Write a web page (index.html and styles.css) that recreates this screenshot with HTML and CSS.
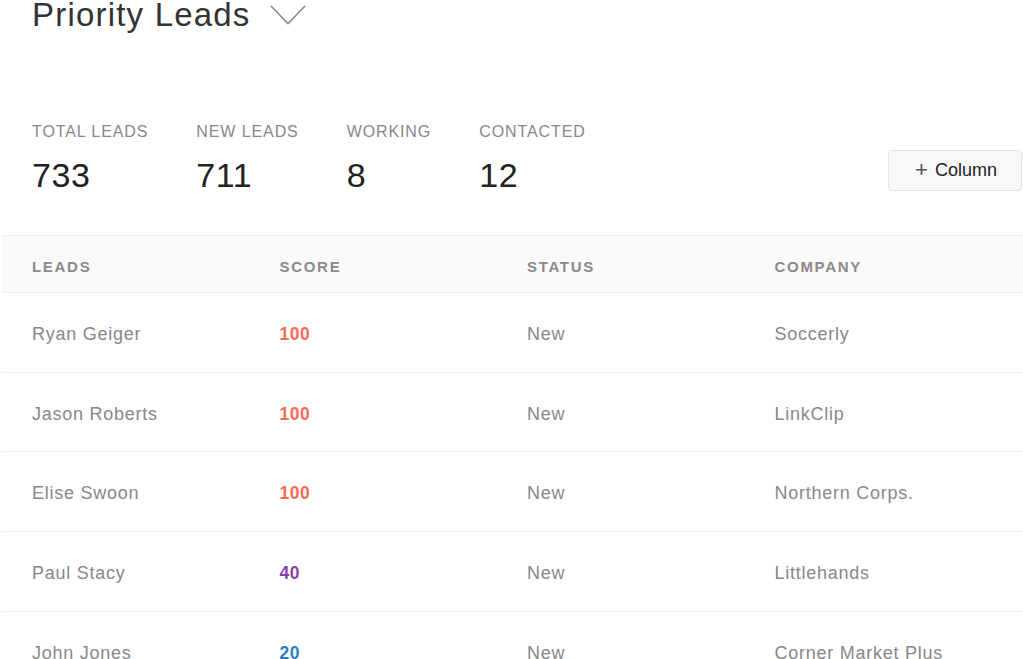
FILE: index.html
```
<!DOCTYPE html>
<html>
<head>
<meta charset="utf-8">
<link rel="stylesheet" href="styles.css">
</head>
<body>
<div class="page">
  <div class="title-row">
    <h1 class="title">Priority Leads</h1>
    <svg class="chev" width="36" height="20" viewBox="0 0 36 20"><polyline points="1,1 18,18.5 35,1" fill="none" stroke="#8a8a8a" stroke-width="1.6"/></svg>
  </div>
  <div class="stats-row">
    <div class="stats">
      <div class="stat"><div class="stat-label">TOTAL LEADS</div><div class="stat-value">733</div></div>
      <div class="stat"><div class="stat-label">NEW LEADS</div><div class="stat-value">711</div></div>
      <div class="stat"><div class="stat-label">WORKING</div><div class="stat-value">8</div></div>
      <div class="stat"><div class="stat-label">CONTACTED</div><div class="stat-value">12</div></div>
    </div>
    <button class="col-btn"><span class="plus">+</span>Column</button>
  </div>
  <div class="table">
    <div class="thead">
      <div class="cell">LEADS</div>
      <div class="cell">SCORE</div>
      <div class="cell">STATUS</div>
      <div class="cell">COMPANY</div>
    </div>
    <div class="row">
      <div class="cell">Ryan Geiger</div>
      <div class="cell score hot">100</div>
      <div class="cell">New</div>
      <div class="cell">Soccerly</div>
    </div>
    <div class="row">
      <div class="cell">Jason Roberts</div>
      <div class="cell score hot">100</div>
      <div class="cell">New</div>
      <div class="cell">LinkClip</div>
    </div>
    <div class="row">
      <div class="cell">Elise Swoon</div>
      <div class="cell score hot">100</div>
      <div class="cell">New</div>
      <div class="cell">Northern Corps.</div>
    </div>
    <div class="row">
      <div class="cell">Paul Stacy</div>
      <div class="cell score warm">40</div>
      <div class="cell">New</div>
      <div class="cell">Littlehands</div>
    </div>
    <div class="row">
      <div class="cell">John Jones</div>
      <div class="cell score cool">20</div>
      <div class="cell">New</div>
      <div class="cell">Corner Market Plus</div>
    </div>
  </div>
</div>
</body>
</html>
```
FILE: styles.css
```
* { box-sizing: border-box; }
html, body { margin: 0; padding: 0; background: #fff; }
body {
  font-family: "Liberation Sans", Arial, Helvetica, sans-serif;
  color: #333;
  overflow: hidden;
}
.page { width: 1023px; }
.title-row {
  display: flex;
  align-items: flex-start;
  padding-left: 32px;
}
.title {
  margin: 0;
  font-size: 33px;
  line-height: 30px;
  font-weight: normal;
  letter-spacing: 1.2px;
  color: #333;
}
.chev { margin-left: 19px; margin-top: 5px; }
.stats-row {
  display: flex;
  justify-content: space-between;
  align-items: flex-end;
  padding-left: 32px;
  padding-right: 1px;
  margin-top: 94px;
}
.stats { display: flex; gap: 48px; }
.stat-label {
  font-size: 16px;
  line-height: 16px;
  letter-spacing: 0.9px;
  color: #888;
}
.stat-value {
  font-size: 34px;
  line-height: 34px;
  letter-spacing: 0.6px;
  color: #222;
  margin-top: 18px;
}
.col-btn {
  width: 134px;
  height: 41px;
  margin-bottom: 1px;
  border: 1px solid #e1e4e7;
  border-radius: 4px;
  background: #f7f8f9;
  font-family: "Liberation Sans", Arial, sans-serif;
  font-size: 18px;
  color: #222;
  display: flex;
  align-items: center;
  justify-content: center;
  gap: 7px;
  padding: 0 0 0 2px;
}
.plus { font-size: 22px; font-weight: 300; color: #555; line-height: 1; margin-top: -2px; }
.table { margin-top: 43px; margin-left: 2px; }
.thead, .row {
  display: grid;
  grid-template-columns: 247.5px 247.5px 247.5px 247.5px;
}
.thead {
  height: 58px;
  background: #fafafa;
  border-top: 1px solid #eef0f0;
  border-bottom: 1px solid #eceff0;
  align-items: center;
  padding-top: 4px;
}
.thead .cell {
  font-size: 15px;
  font-weight: bold;
  letter-spacing: 1.7px;
  color: #8a8a8a;
}
.cell { padding-left: 30px; white-space: nowrap; }
.row {
  height: 79.7px;
  border-bottom: 1px solid #eef2f2;
  align-items: center;
  padding-top: 4px;
}
.row .cell {
  font-size: 18px;
  letter-spacing: 0.75px;
  color: #888;
}
.row .score { font-size: 17.5px; font-weight: bold; letter-spacing: 0.5px; }
.row .hot { color: #fb6a4f; }
.row .warm { color: #8a3fa8; }
.row .cool { color: #2a7dc0; }
```
